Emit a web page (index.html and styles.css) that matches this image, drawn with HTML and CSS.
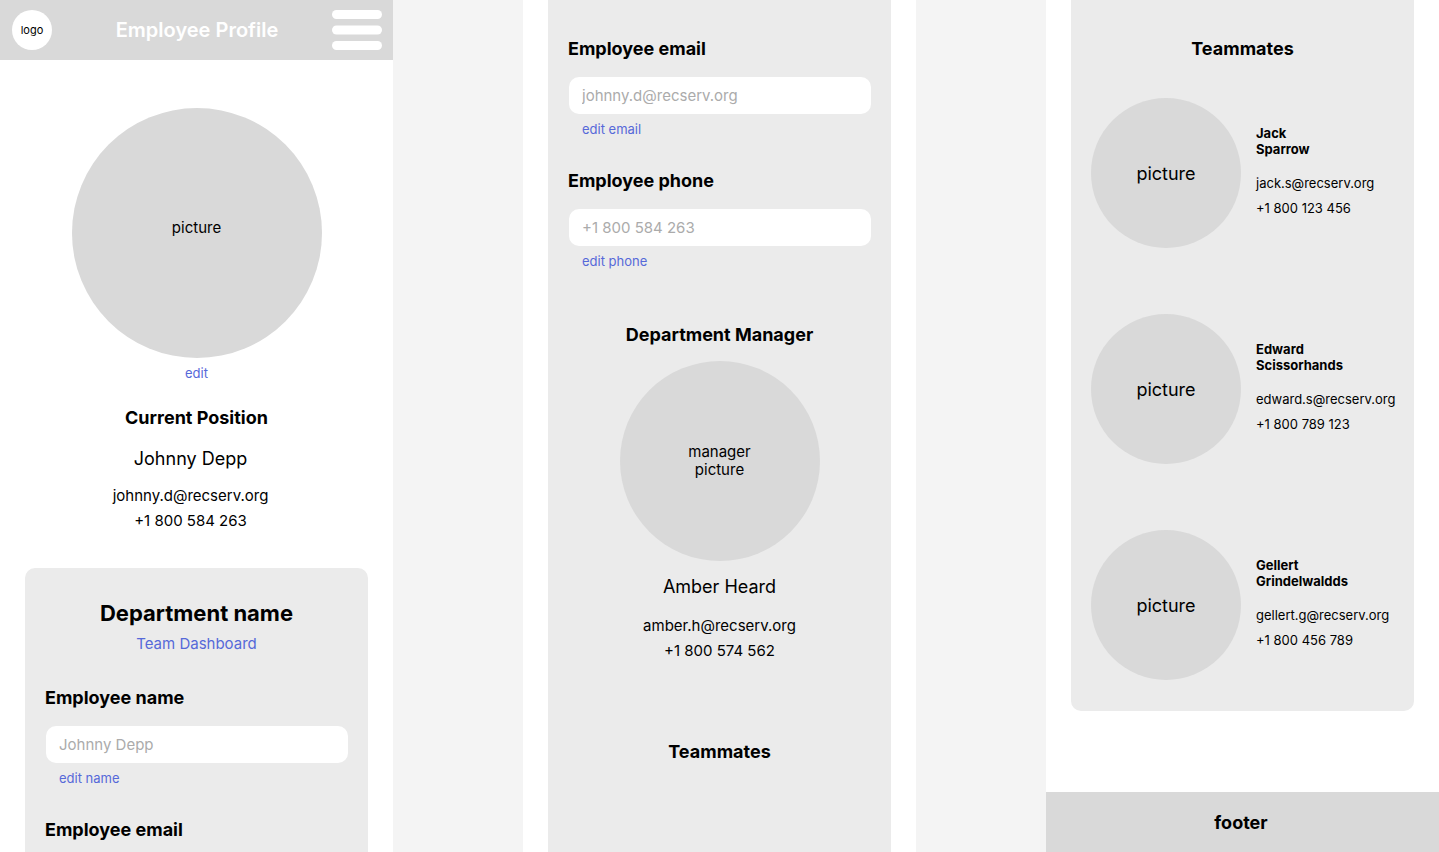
FILE: index.html
```html
<!DOCTYPE html>
<html lang="en">
<head>
<meta charset="utf-8">
<meta name="viewport" content="width=device-width, initial-scale=1">
<title>Employee Profile</title>
<link rel="stylesheet" href="styles.css">
</head>
<body>
<main class="board">
  <section class="screen">
    <header class="topbar">
      <a class="logo" href="#">logo</a>
      <h1 class="topbar-title">Employee Profile</h1>
      <button class="menu-button" type="button" aria-label="Menu">
        <svg width="50" height="40" viewBox="0 0 50 40" fill="#fff" aria-hidden="true">
          <rect width="50" height="9" rx="4.5"/>
          <rect y="15.5" width="50" height="9" rx="4.5"/>
          <rect y="31" width="50" height="9" rx="4.5"/>
        </svg>
      </button>
    </header>
    <div class="profile">
      <div class="avatar avatar-large">picture</div>
      <a class="link link-small profile-edit" href="#">edit</a>
      <h2 class="heading">Current Position</h2>
      <div class="contact profile-contact">
        <p class="contact-name">Johnny Depp</p>
        <p class="contact-line">johnny.d@recserv.org</p>
        <p class="contact-line">+1 800 584 263</p>
      </div>
    </div>
    <div class="card card-first">
      <h2 class="department">Department name</h2>
      <a class="link dashboard-link" href="#">Team Dashboard</a>
      <div class="fields">
        <div class="field">
          <label class="heading" for="name">Employee name</label>
          <input class="field-input" id="name" type="text" placeholder="Johnny Depp">
          <a class="link link-small field-edit" href="#">edit name</a>
        </div>
        <h3 class="heading">Employee email</h3>
      </div>
    </div>
  </section>

  <section class="screen">
    <div class="card card-middle">
      <div class="fields">
        <div class="field">
          <label class="heading" for="email">Employee email</label>
          <input class="field-input" id="email" type="email" placeholder="johnny.d@recserv.org">
          <a class="link link-small field-edit" href="#">edit email</a>
        </div>
        <div class="field">
          <label class="heading" for="phone">Employee phone</label>
          <input class="field-input" id="phone" type="tel" placeholder="+1 800 584 263">
          <a class="link link-small field-edit" href="#">edit phone</a>
        </div>
      </div>
      <div class="manager">
        <h2 class="heading">Department Manager</h2>
        <div class="avatar avatar-medium">manager<br>picture</div>
        <div class="contact manager-contact">
          <p class="contact-name">Amber Heard</p>
          <p class="contact-line">amber.h@recserv.org</p>
          <p class="contact-line">+1 800 574 562</p>
        </div>
      </div>
      <h2 class="heading centered">Teammates</h2>
    </div>
  </section>

  <section class="screen">
    <div class="card card-last">
      <h2 class="heading centered">Teammates</h2>
      <ul class="team">
        <li class="mate">
          <div class="avatar avatar-small">picture</div>
          <div class="mate-info">
            <h3 class="mate-name">Jack<br>Sparrow</h3>
            <p class="mate-line">jack.s@recserv.org</p>
            <p class="mate-line">+1 800 123 456</p>
          </div>
        </li>
        <li class="mate">
          <div class="avatar avatar-small">picture</div>
          <div class="mate-info">
            <h3 class="mate-name">Edward<br>Scissorhands</h3>
            <p class="mate-line">edward.s@recserv.org</p>
            <p class="mate-line">+1 800 789 123</p>
          </div>
        </li>
        <li class="mate">
          <div class="avatar avatar-small">picture</div>
          <div class="mate-info">
            <h3 class="mate-name">Gellert<br>Grindelwaldds</h3>
            <p class="mate-line">gellert.g@recserv.org</p>
            <p class="mate-line">+1 800 456 789</p>
          </div>
        </li>
      </ul>
    </div>
    <footer class="footer heading">footer</footer>
  </section>
</main>
</body>
</html>
```

FILE: styles.css
```css
* {
  box-sizing: border-box;
  margin: 0;
  padding: 0;
}

body {
  background: #f4f4f4;
  color: #000;
  font-family: Inter, "Liberation Sans", sans-serif;
  font-size: 15px;
  line-height: 18px;
}

.board {
  display: grid;
  grid-template-columns: repeat(3, minmax(0, 1fr));
  column-gap: 130px;
  min-height: 100vh;
}

.screen {
  display: flex;
  flex-direction: column;
  background: #fff;
}

.topbar {
  display: grid;
  grid-template-columns: 1fr auto 1fr;
  align-items: center;
  padding: 10px 11px 10px 12px;
  background: #d9d9d9;
}

.logo {
  display: flex;
  align-items: center;
  justify-content: center;
  width: 40px;
  height: 40px;
  border-radius: 50%;
  background: #fff;
  color: #000;
  font-size: 11px;
  text-decoration: none;
}

.topbar-title {
  color: #fff;
  font-size: 20px;
  font-weight: 600;
  line-height: 24px;
}

.menu-button {
  justify-self: end;
  height: 40px;
  border: 0;
  background: none;
  cursor: pointer;
}

.menu-button svg {
  display: block;
}

.heading {
  font-size: 18px;
  font-weight: 700;
  line-height: 22px;
}

.centered {
  text-align: center;
}

.link {
  color: #5669d9;
  text-decoration: none;
}

.link-small {
  font-size: 13px;
  line-height: 16px;
}

.avatar {
  display: flex;
  flex: none;
  align-items: center;
  justify-content: center;
  border-radius: 50%;
  background: #d9d9d9;
  text-align: center;
}

.avatar-large {
  width: 250px;
  height: 250px;
  padding-bottom: 10px;
}

.avatar-medium {
  width: 200px;
  height: 200px;
  margin: 15px 0;
}

.avatar-small {
  width: 150px;
  height: 150px;
  padding-top: 2px;
  font-size: 18px;
  line-height: 22px;
}

.profile {
  display: flex;
  flex-direction: column;
  align-items: center;
  padding: 48px 0 38px;
}

.profile-edit {
  margin: 7px 0 26px;
}

.profile-contact {
  margin-top: 19px;
  padding-right: 12px;
}

.contact {
  display: grid;
  row-gap: 7px;
  text-align: center;
}

.contact-name {
  margin-bottom: 10px;
  font-size: 18px;
  line-height: 22px;
}

.manager-contact .contact-name {
  margin-bottom: 12px;
}

.card {
  display: flex;
  flex-direction: column;
  margin: 0 25px;
  padding: 38px 20px;
  background: #ebebeb;
}

.card-first {
  flex: 1;
  padding: 31px 20px 11px;
  border-radius: 10px 10px 0 0;
}

.card-middle {
  flex: 1;
}

.card-last {
  padding-bottom: 31px;
  border-radius: 0 0 10px 10px;
}

.department {
  font-size: 22px;
  font-weight: 700;
  line-height: 28px;
  text-align: center;
}

.dashboard-link {
  align-self: center;
  margin: 8px 0 34px;
}

.fields {
  display: grid;
  row-gap: 33px;
}

.field {
  display: flex;
  flex-direction: column;
  align-items: flex-start;
}

.field-input {
  align-self: stretch;
  height: 37px;
  margin: 17px 0 7px 1px;
  padding: 0 13px;
  border: 0;
  border-radius: 10px;
  background: #fff;
  color: #000;
  font: inherit;
}

.field-input::placeholder {
  color: #ababab;
  opacity: 1;
}

.field-edit {
  margin-left: 14px;
}

.manager {
  display: flex;
  flex-direction: column;
  align-items: center;
  margin: 55px 0 81px;
}

.team {
  display: grid;
  row-gap: 66px;
  margin-top: 38px;
  list-style: none;
}

.mate {
  display: flex;
  column-gap: 15px;
}

.mate-info {
  display: grid;
  align-content: start;
  row-gap: 9px;
  padding-top: 27px;
  font-size: 13px;
  line-height: 16px;
}

.mate-name {
  margin-bottom: 9px;
  font-size: 13px;
  font-weight: 700;
}

.footer {
  margin-top: auto;
  padding: 20px 3px 18px 0;
  background: #d9d9d9;
  text-align: center;
}
```
